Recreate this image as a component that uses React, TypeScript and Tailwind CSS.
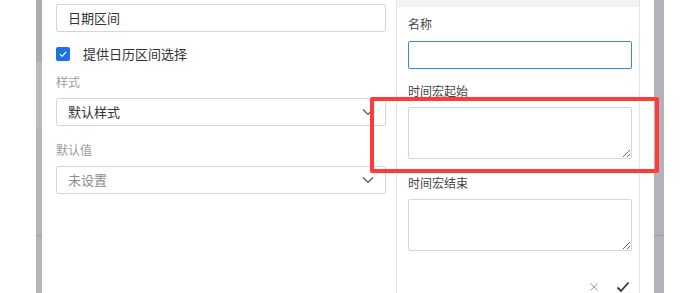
import * as React from "react";

const font = { fontFamily: '"Noto Sans CJK SC", "Noto Sans", sans-serif' };

function Chevron() {
  return (
    <svg className="w-[12px] h-[8px] text-[#555]" viewBox="0 0 12 8" fill="none" stroke="currentColor" strokeWidth={1.2}>
      <path d="M1 1.5 L6 6.5 L11 1.5" />
    </svg>
  );
}

function SelectBox({ value, placeholder }: { value: string; placeholder?: boolean }) {
  return (
    <div className="h-[28px] flex items-center justify-between px-[11px] border border-[#d3d6dc] rounded-[2px] bg-white">
      <span className={placeholder ? "text-[13px] text-[#8c8c8c]" : "text-[13px] text-[#333]"}>{value}</span>
      <Chevron />
    </div>
  );
}

export default function App() {
  return (
    <div className="relative w-[700px] h-[293px] flex bg-white overflow-hidden" style={font}>
      <div className="w-[36px] bg-white" />
      <div className="w-[6px] bg-[#b3b5ba] flex flex-col">
        <div className="h-[62px] bg-[#acaeb3]" />
        <div className="h-[66px] bg-[#b9bbbf]" />
        <div className="h-[107px]" />
        <div className="h-[1px] bg-[#9a9ca1]" />
      </div>

      {/* modal */}
      <div className="w-[612px] flex bg-white">
        {/* left form */}
        <div className="w-[355px] pl-[14px] pr-[10px] pt-[4px] border-r border-[#e3e5e9]">
          <div className="h-[28px] flex items-center px-[11px] border border-[#d3d6dc] rounded-[2px]">
            <span className="text-[13px] text-[#333]">日期区间</span>
          </div>
          <div className="mt-[15px] flex items-center gap-[13px] h-[14px]">
            <div className="w-[14px] h-[14px] rounded-[2px] bg-[#1b72e0] flex items-center justify-center">
              <svg className="w-[10px] h-[10px]" viewBox="0 0 10 10" fill="none" stroke="white" strokeWidth={1.2}>
                <path d="M2 5.2 L4.2 7.2 L8.2 2.8" />
              </svg>
            </div>
            <span className="text-[13px] text-[#333]">提供日历区间选择</span>
          </div>
          <div className="mt-[13px] h-[16px] flex items-center text-[12px] text-[#9a9da3]">样式</div>
          <div className="mt-[8px]">
            <SelectBox value="默认样式" />
          </div>
          <div className="mt-[16px] h-[16px] flex items-center text-[12px] text-[#9a9da3]">默认值</div>
          <div className="mt-[8px]">
            <SelectBox value="未设置" placeholder />
          </div>
        </div>

        {/* right panel */}
        <div className="w-[243px] flex flex-col border-r border-[#e3e5e9]">
          <div className="h-[7px] bg-[#f2f3f6]" />
          <div className="pl-[11px] pr-[7px]">
            <div className="mt-[9px] h-[16px] flex items-center text-[12px] text-[#444]">名称</div>
            <input className="mt-[9px] w-full h-[28px] border border-[#3d86e0] rounded-[2px] outline-none px-[8px] text-[13px]" />
            <div className="mt-[14px] h-[16px] flex items-center text-[12px] text-[#444]">时间宏起始</div>
            <textarea className="mt-[8px] block w-full h-[52px] border border-[#d3d6dc] rounded-[2px] outline-none px-[8px] text-[13px]" />
            <div className="mt-[16px] h-[16px] flex items-center text-[12px] text-[#444]">时间宏结束</div>
            <textarea className="mt-[8px] block w-full h-[52px] border border-[#d3d6dc] rounded-[2px] outline-none px-[8px] text-[13px]" />
            <div className="mt-[30px] flex justify-end items-center gap-[17px] pr-[2px]">
              <svg className="w-[10px] h-[10px] text-[#9a9a9a]" viewBox="0 0 10 10" fill="none" stroke="currentColor" strokeWidth={1}>
                <path d="M1.5 1.5 L8.5 8.5 M8.5 1.5 L1.5 8.5" />
              </svg>
              <svg className="w-[14px] h-[12px] text-[#333]" viewBox="0 0 14 12" fill="none" stroke="currentColor" strokeWidth={1.8}>
                <path d="M1.5 6.5 L5 10 L12.5 1.5" />
              </svg>
            </div>
          </div>
        </div>
        <div className="flex-1" />
      </div>

      <div className="w-[10px] bg-[#b1b3b8] flex flex-col">
        <div className="h-[235px]" />
        <div className="h-[1px] bg-[#9a9ca1]" />
      </div>
      <div className="flex-1 bg-white" />

      {/* annotation */}
      <div className="absolute left-[370px] top-[97px] w-[289px] h-[76px] border-[4px] border-[#fe3a3a] rounded-[2px] pointer-events-none" />
    </div>
  );
}
